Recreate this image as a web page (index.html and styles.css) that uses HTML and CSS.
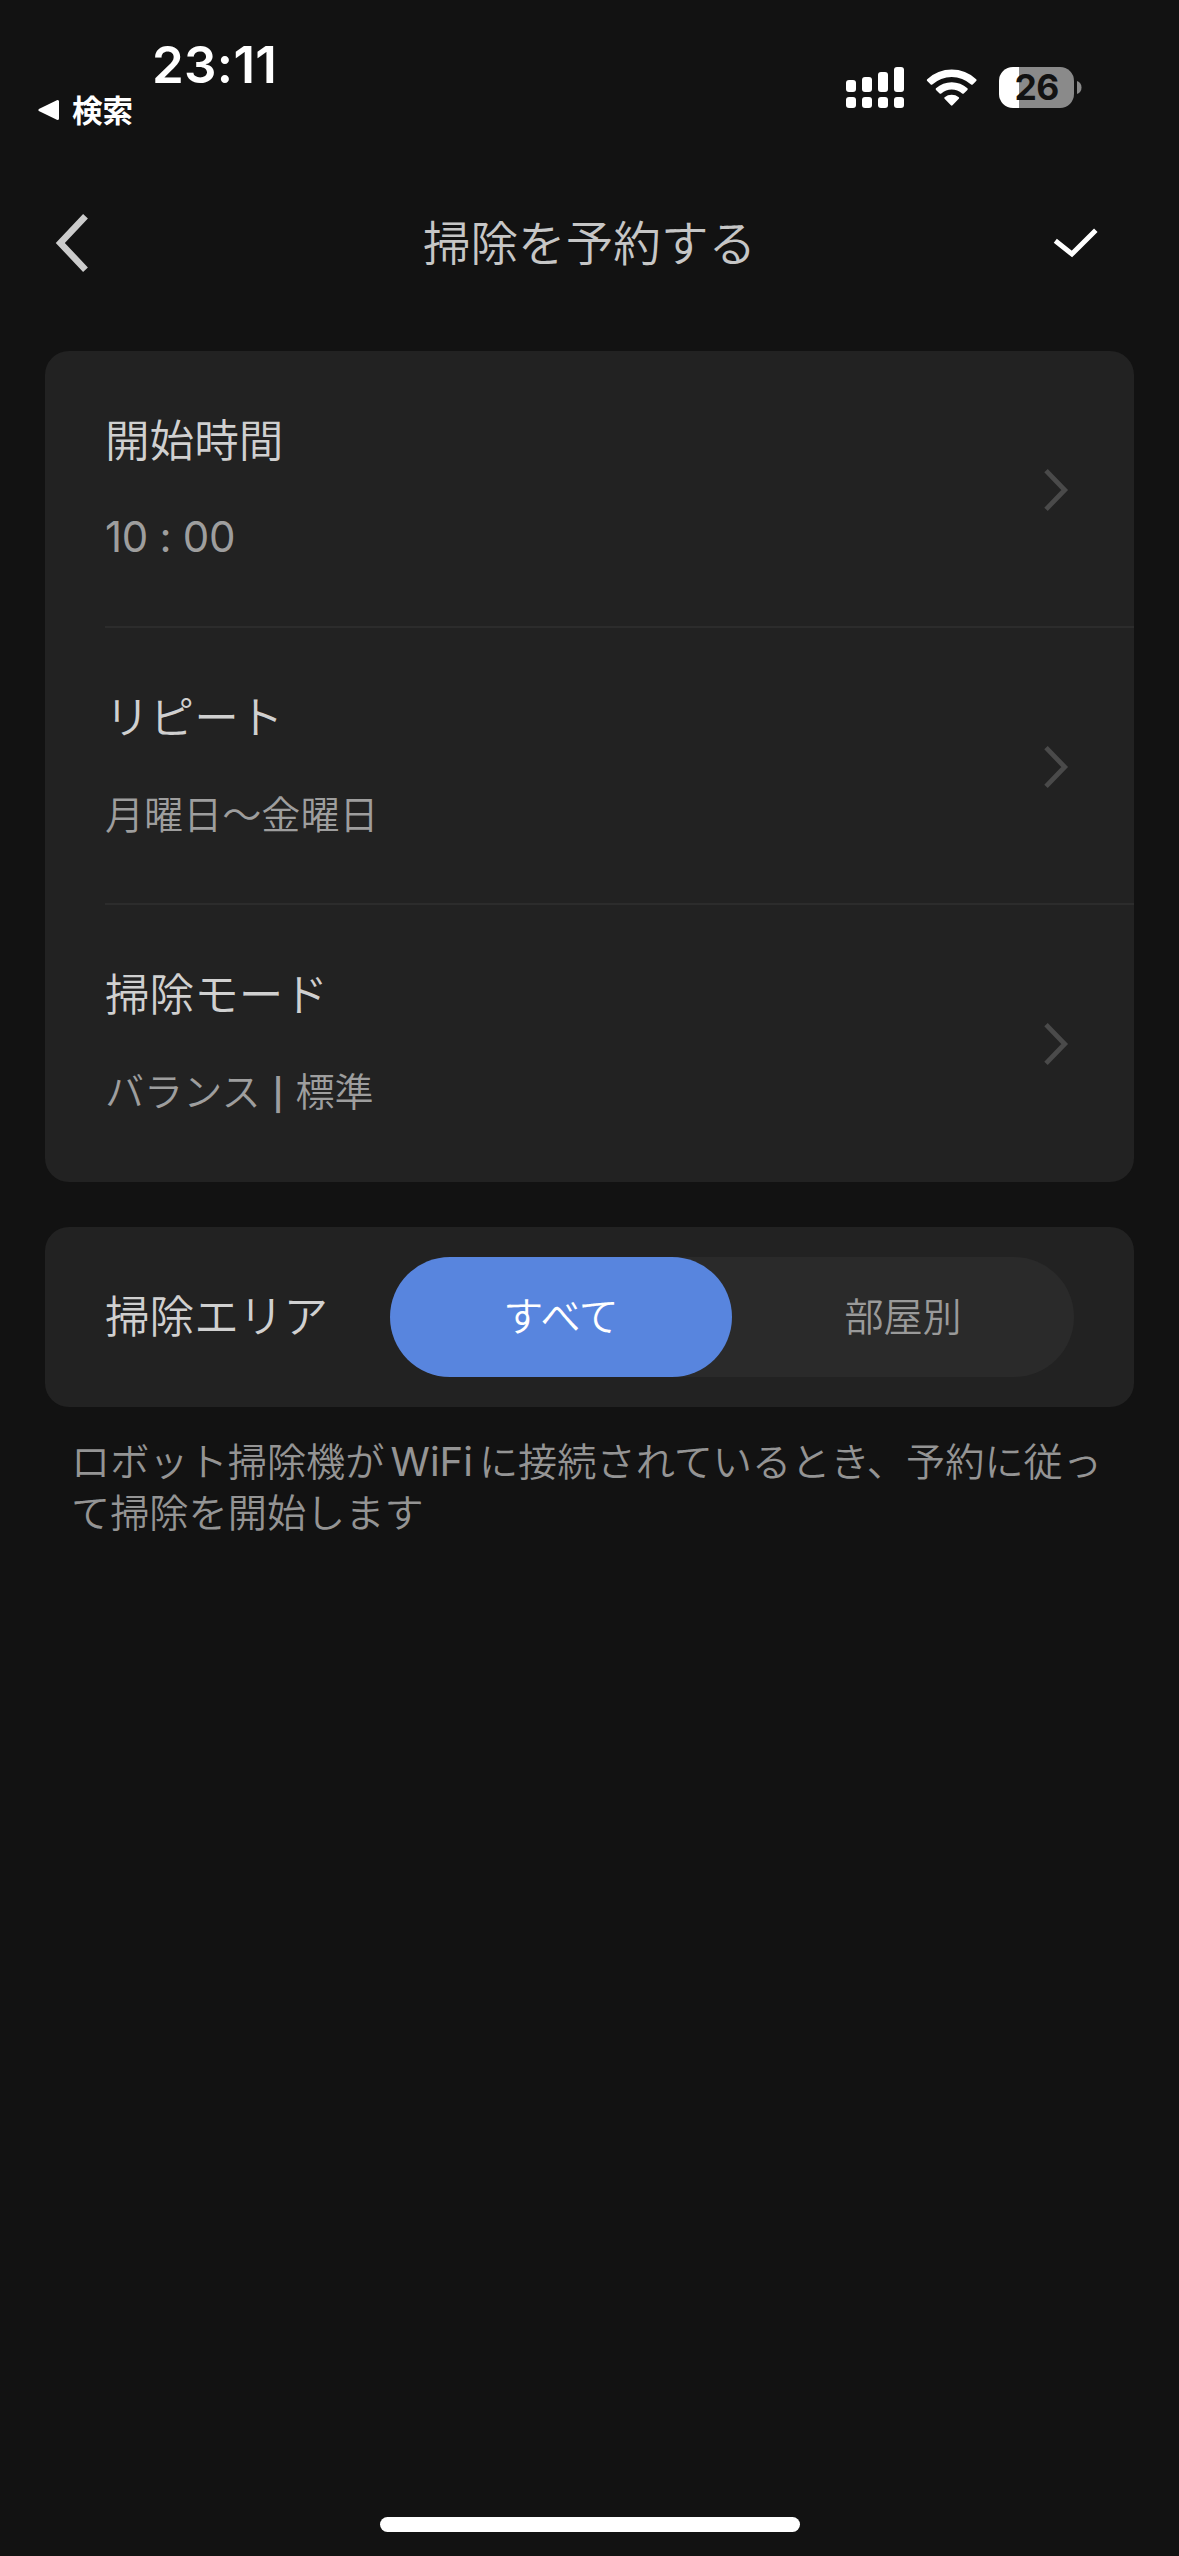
FILE: index.html
```html
<!DOCTYPE html>
<html lang="ja">
<head>
<meta charset="utf-8">
<title>掃除を予約する</title>
<link rel="stylesheet" href="styles.css">
</head>
<body>
<div class="screen">
  <header class="status">
    <div class="status-left">
      <div class="clock">23:11</div>
      <div class="return-link">
        <svg class="return-arrow" width="22" height="22" viewBox="0 0 22 22"><path d="M2 11 L19.5 2.5 V19.5 Z" fill="#fff" stroke="#fff" stroke-width="3" stroke-linejoin="round"/></svg>
        <span>検索</span>
      </div>
    </div>
    <div class="status-right">
      <svg width="58" height="41" viewBox="0 0 58 41" fill="#fff">
        <rect x="0" y="13" width="10" height="12" rx="3"/><rect x="16" y="10" width="10" height="15" rx="3"/><rect x="32" y="5" width="10" height="20" rx="3"/><rect x="48" y="0" width="10" height="25" rx="3"/>
        <rect x="0" y="30" width="10" height="11" rx="3"/><rect x="16" y="30" width="10" height="11" rx="3"/><rect x="32" y="30" width="10" height="11" rx="3"/><rect x="48" y="30" width="10" height="11" rx="3"/>
      </svg>
      <svg class="wifi" width="52" height="41" viewBox="0 0 52 41" fill="#fff">
        <path d="M1.2 12.2 Q.4 13.1 1.2 14 L4.7 17.4 Q5.5 18.1 6.3 17.4 A29 29 0 0 1 45.1 17.4 Q45.9 18.1 46.7 17.4 L50.2 14 Q51 13.1 50.2 12.2 A36 36 0 0 0 1.2 12.2 Z"/>
        <path d="M10 21.3 Q9.2 22.1 10 22.9 L13.6 26.4 Q14.4 27.1 15.3 26.4 A16 16 0 0 1 36.1 26.4 Q37 27.1 37.8 26.4 L41.4 22.9 Q42.2 22.1 41.4 21.3 A23.5 23.5 0 0 0 10 21.3 Z"/>
        <path d="M18.6 30.2 Q17.8 31 18.6 31.8 L24.9 38.3 Q25.7 39.2 26.5 38.3 L32.8 31.8 Q33.6 31 32.8 30.2 A11.5 11.5 0 0 0 18.6 30.2 Z"/>
      </svg>
      <div class="battery"><span>26</span></div>
      <svg class="battery-nub" width="5" height="13" viewBox="0 0 5 13"><path d="M0 0 Q4.5 1.8 4.5 6.5 T0 13 Z" fill="#8a8a8a"/></svg>
    </div>
  </header>

  <nav class="navbar">
    <svg class="back" width="36" height="60" viewBox="0 0 36 60" fill="none" stroke="#ccc" stroke-width="6.6"><path d="M31.5 3.3 L6.3 30 L31.5 56.7"/></svg>
    <h1 class="title">掃除を予約する</h1>
    <svg class="done" width="46" height="30" viewBox="0 0 46 30" fill="none" stroke="#fff" stroke-width="5"><path d="M2.3 12.7 L18.9 26 L42.8 2.3"/></svg>
  </nav>

  <main>
    <section class="card">
      <div class="row">
        <div class="row-text"><div class="label">開始時間</div><div class="value time">10 : 00</div></div>
        <svg class="chevron" width="26" height="44" viewBox="0 0 26 44"><path d="M3 2.7 L21.7 22 L3 41.3"/></svg>
      </div>
      <div class="row">
        <div class="row-text"><div class="label">リピート</div><div class="value">月曜日〜金曜日</div></div>
        <svg class="chevron" width="26" height="44" viewBox="0 0 26 44"><path d="M3 2.7 L21.7 22 L3 41.3"/></svg>
      </div>
      <div class="row">
        <div class="row-text"><div class="label">掃除モード</div><div class="value">バランス<span class="bar">|</span>標準</div></div>
        <svg class="chevron" width="26" height="44" viewBox="0 0 26 44"><path d="M3 2.7 L21.7 22 L3 41.3"/></svg>
      </div>
    </section>

    <section class="card area">
      <div class="label">掃除エリア</div>
      <div class="segmented">
        <div class="segment selected">すべて</div>
        <div class="segment">部屋別</div>
      </div>
    </section>

    <p class="note">ロボット掃除機が<span class="latin">WiFi</span>に接続されているとき、予約に従っ<br>て掃除を開始します</p>
  </main>
  <div class="home-indicator"></div>
</div>
</body>
</html>
```
FILE: styles.css
```css
* { box-sizing: border-box; }
body {
  margin: 0;
  background: #121212;
  color: #d0d0d0;
  font-family: "Noto Sans CJK JP", sans-serif;
  font-weight: 350;
}
svg { display: block; flex: none; }
.screen {
  width: 1179px;
  height: 2556px;
  display: flex;
  flex-direction: column;
  overflow: hidden;
}

.status {
  height: 183px;
  display: flex;
  justify-content: space-between;
  color: #fff;
}
.status-left { padding: 35px 0 0 38px; }
.clock {
  margin-left: 114px;
  font: 600 51px/60px Inter, sans-serif;
  letter-spacing: 0.3px;
}
.return-link {
  display: flex;
  align-items: center;
  gap: 12px;
  margin-top: -3px;
  font-size: 30.6px;
  line-height: 36px;
  font-weight: 700;
}
.return-link span { position: relative; top: -1px; }
.status-right {
  display: flex;
  align-items: center;
  height: 41px;
  margin: 67px 97px 0 0;
}
.wifi { margin-left: 22px; }
.battery {
  width: 75px;
  height: 41px;
  margin-left: 21px;
  border-radius: 14px;
  background: linear-gradient(to right, #fff 20px, #8a8a8a 20px);
  color: #121212;
  text-align: center;
  font: 650 35.5px/41px Inter, sans-serif;
  letter-spacing: -0.8px;
}
.battery-nub { margin-left: 3px; }

.navbar {
  height: 120px;
  display: grid;
  grid-template-columns: 120px 1fr 120px;
  align-items: center;
}
.back { margin-left: 54px; }
.title {
  margin: 0;
  padding-bottom: 5px;
  text-align: center;
  font-size: 47.6px;
  line-height: 60px;
  font-weight: 350;
  color: #c6c6c6;
}
.done { margin-left: -6px; }

main { padding: 48px 45px 0; }
.card {
  border-radius: 24px;
  background: #222;
  overflow: hidden;
}
.row {
  height: 277px;
  margin-left: 60px;
  padding-right: 65px;
  display: flex;
  align-items: center;
  justify-content: space-between;
  border-bottom: 2px solid #2c2c2c;
}
.row:last-child { border-bottom-color: transparent; }
.row-text { align-self: flex-start; padding-top: 57px; }
.label { font-size: 44.6px; line-height: 60px; }
.value {
  margin-top: 37px;
  font-size: 39.1px;
  line-height: 60px;
  color: #9e9e9e;
}
.time {
  padding-top: 2px;
  font-family: Inter, sans-serif;
  font-size: 42px;
  font-weight: 400;
  letter-spacing: -0.3px;
}
.bar {
  display: inline-block;
  width: 35px;
  text-align: center;
  font: 600 31px/40px Inter, sans-serif;
}
.chevron { margin-top: 2px; fill: none; stroke: #4a4a4a; stroke-width: 4.8; }

.area {
  height: 180px;
  margin-top: 45px;
  padding: 0 60px;
  display: flex;
  align-items: center;
  justify-content: space-between;
}
.area .label { padding-bottom: 7px; }
.segmented {
  display: flex;
  width: 684px;
  height: 120px;
  border-radius: 60px;
  background: #2a2a2a;
}
.segment {
  flex: 1;
  border-radius: 60px;
  text-align: center;
  font-size: 39.1px;
  line-height: 114px;
  color: #9a9a9a;
}
.selected { background: #5885de; color: #fff; font-size: 40px; }

.note {
  margin: 27px 0 0 26px;
  font-size: 39.2px;
  line-height: 51px;
  color: #949494;
  white-space: nowrap;
}
.latin {
  margin: 0 6px 0 6px;
  font: 400 40px/40px Inter, sans-serif;
}

.home-indicator {
  width: 420px;
  height: 15px;
  margin: auto auto 24px;
  border-radius: 7.5px;
  background: #fff;
}
```
